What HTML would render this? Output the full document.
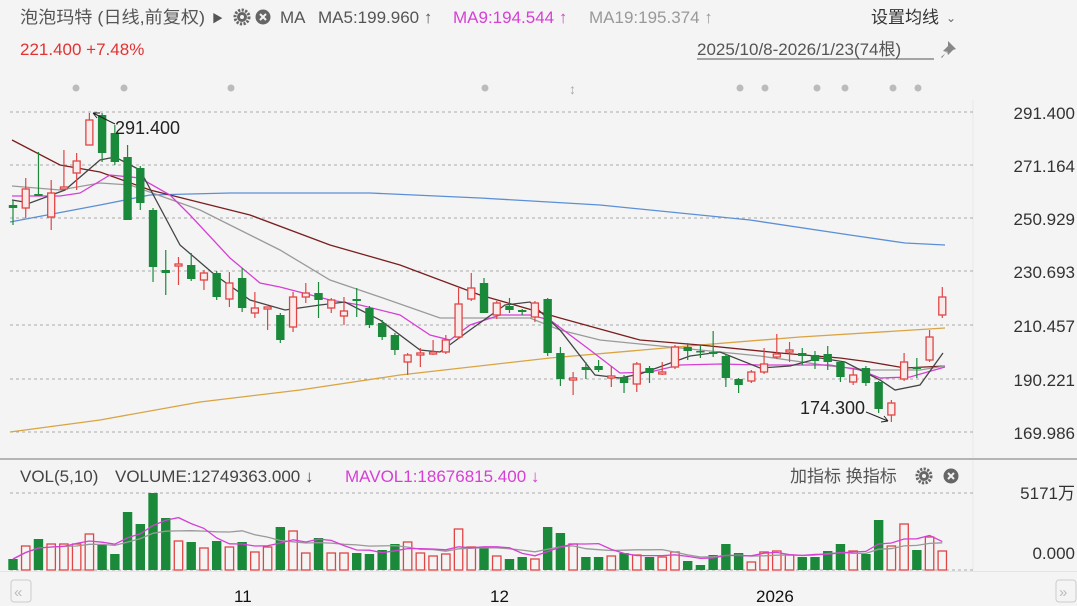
<!DOCTYPE html>
<html><head><meta charset="utf-8">
<style>
body{margin:0;width:1077px;height:606px;overflow:hidden;background:#f4f4f4;font-family:"Liberation Sans","Noto Sans CJK SC",sans-serif;}
svg{position:absolute;left:0;top:0}
</style></head><body>
<svg id="s" width="1077" height="606" xmlns="http://www.w3.org/2000/svg" font-family="Liberation Sans, Noto Sans CJK SC, sans-serif">
<rect x="0" y="0" width="1077" height="606" fill="#f4f4f4"/>
<line x1="973" y1="100" x2="973" y2="570" stroke="#e8e8e8"/>
<g stroke="#aaa" stroke-dasharray="3,3" stroke-width="1">
<line x1="10" y1="112" x2="973" y2="112"/><line x1="10" y1="165" x2="973" y2="165"/>
<line x1="10" y1="218" x2="973" y2="218"/><line x1="10" y1="271" x2="973" y2="271"/>
<line x1="10" y1="325" x2="973" y2="325"/><line x1="10" y1="379" x2="973" y2="379"/>
<line x1="10" y1="432" x2="973" y2="432"/>
<line x1="10" y1="493" x2="973" y2="493"/><line x1="10" y1="570" x2="973" y2="570"/>
</g>
<line x1="0" y1="459" x2="1077" y2="459" stroke="#b5b5b5" stroke-width="2"/>
<line x1="0" y1="571.5" x2="1077" y2="571.5" stroke="#e4e4e4"/>
<g fill="#333" font-size="17" text-anchor="end">
<text x="1075" y="119">291.400</text><text x="1075" y="172">271.164</text>
<text x="1075" y="225">250.929</text><text x="1075" y="278">230.693</text>
<text x="1075" y="332">210.457</text><text x="1075" y="386">190.221</text>
<text x="1075" y="439">169.986</text>
<text x="1075" y="499">5171万</text><text x="1075" y="559">0.000</text>
</g>
<g font-size="17" fill="#555">
<text x="20" y="23" textLength="185" lengthAdjust="spacingAndGlyphs">泡泡玛特 (日线,前复权)</text>
<text x="212" y="22" font-size="11">▶</text>
<text x="280" y="23">MA</text>
<text x="318" y="23">MA5:199.960 ↑</text>
<text x="453" y="23" fill="#d63fd6">MA9:194.544 ↑</text>
<text x="589" y="23" fill="#999">MA19:195.374 ↑</text>
<text x="871" y="23" fill="#333">设置均线</text>
<text x="946" y="22" font-size="12" fill="#666">⌄</text>
<text x="20" y="55" fill="#e03333">221.400 +7.48%</text>
<text x="697" y="55">2025/10/8-2026/1/23(74根)</text>
<text x="20" y="482" fill="#444">VOL(5,10)</text>
<text x="115" y="482" fill="#444">VOLUME:12749363.000 ↓</text>
<text x="345" y="482" fill="#d63fd6">MAVOL1:18676815.400 ↓</text>
<text x="790" y="482" fill="#555">加指标 换指标</text>
<text x="234" y="602" fill="#111">11</text>
<text x="490" y="602" fill="#111">12</text>
<text x="756" y="602" fill="#111">2026</text>
</g>
<line x1="697" y1="59" x2="934" y2="59" stroke="#555"/>
<path d="M948 41l8 8-3 1-5 5-1-4-5 7-1-1 6-5-4-1 5-5z" fill="#888"/>
<g fill="#666">
<circle cx="242" cy="17" r="5"/><circle cx="242" cy="17" r="7" fill="none" stroke="#666" stroke-width="3" stroke-dasharray="2.2,1.4"/><circle cx="242" cy="17" r="2" fill="#f4f4f4"/>
<circle cx="263" cy="17" r="7.5"/>
<circle cx="924" cy="476" r="5"/><circle cx="924" cy="476" r="7" fill="none" stroke="#666" stroke-width="3" stroke-dasharray="2.2,1.4"/><circle cx="924" cy="476" r="2" fill="#f4f4f4"/>
<circle cx="951" cy="476" r="7.5"/>
</g>
<g stroke="#f4f4f4" stroke-width="2"><path d="M260 14l6 6M266 14l-6 6"/><path d="M948 473l6 6M954 473l-6 6"/></g>
<g fill="none" stroke="#ccc"><rect x="11" y="580" width="20" height="22" rx="3"/><rect x="1056" y="580" width="20" height="22" rx="3"/></g>
<text x="14" y="597" font-size="15" fill="#bbb">«</text><text x="1059" y="597" font-size="15" fill="#bbb">»</text>
<g fill="#bbb"><circle cx="76" cy="88" r="3.5"/><circle cx="124" cy="88" r="3.5"/><circle cx="231" cy="88" r="3.5"/><circle cx="485" cy="88" r="3.5"/><circle cx="740" cy="88" r="3.5"/><circle cx="765" cy="88" r="3.5"/><circle cx="817" cy="88" r="3.5"/><circle cx="845" cy="88" r="3.5"/><circle cx="893" cy="88" r="3.5"/><circle cx="918" cy="88" r="3.5"/></g>
<text x="569" y="94" font-size="14" fill="#aaa">↕</text>
<g id="ma" fill="none" stroke-width="1.3"></g>
<g id="cd"></g>
<g id="vol"></g>
<text x="115" y="134" font-size="18" fill="#222">291.400</text>
<path d="M115 124L93 113M93 113l7 0M93 113l4 5" stroke="#222" fill="none"/>
<text x="800" y="414" font-size="18" fill="#222">174.300</text>
<path d="M866 412L888 421M888 421l-7 1M888 421l-4 -5" stroke="#222" fill="none"/>
</svg>
<script>
var C=[
['g',205,208,200,225],['r',189,208,178,218],['g',194,196,152,196],['r',193,217,180,230],['r',187,189,150,190],['r',161,173,153,190],['r',120,145,113,145],['g',115,153,113,162],['g',133,162,125,165],['g',157,220,145,220],['g',168,203,166,210],['g',210,267,208,282],['g',270,273,250,295],['r',264,266,257,285],['g',265,279,253,281],['r',273,280,270,290],['g',273,297,271,300],['r',283,299,272,307],['g',278,308,268,312],['r',308,313,292,318],['r',307,309,307,330],['g',315,340,313,343],['r',297,327,292,332],['r',293,297,283,303],['g',293,300,282,318],['r',300,308,298,313],['r',311,316,297,325],['g',299,301,288,317],['g',308,325,306,328],['g',323,337,320,340],['g',335,350,333,355],['r',355,362,353,375],['r',353,355,348,367],['r',352,354,340,355],['r',340,352,335,354],['r',304,337,288,339],['r',288,299,273,301],
['g',283,313,278,313],['r',303,315,301,319],['g',306,310,298,313],['g',310,312,309,315],['r',303,317,301,322],['g',299,353,298,356],['g',353,379,347,386],['r',378,380,372,395],['g',367,370,362,379],['g',366,370,360,372],['r',376,378,366,387],['g',377,383,375,393],['r',364,384,362,392],['g',368,373,366,383],['r',372,374,362,375],['r',347,367,345,369],['g',347,351,343,360],['g',351,352,345,358],['g',352,354,331,357],['g',356,378,354,387],['g',379,385,378,393],['r',372,381,370,383],['r',364,372,348,374],['r',354,357,334,359],['r',350,352,342,362],['g',353,356,348,365],['g',355,361,351,369],['g',354,362,346,370],['g',362,377,361,382],['r',375,382,368,385],['g',368,383,366,386],['g',382,409,381,413],['r',403,415,400,422],['r',362,379,353,381],['g',367,369,358,378],['r',337,360,330,362],['r',297,315,287,318]];
var V=[559,546,539,544,544,544,534,545,554,512,524,493,518,541,542,548,541,547,542,552,547,527,531,553,538,553,553,553,554,550,544,542,553,556,554,529,547,548,556,559,557,559,527,533,544,557,557,556,553,555,557,557,552,561,565,555,544,553,562,552,551,555,557,557,551,544,551,554,520,546,524,550,537,551];
var ns="http://www.w3.org/2000/svg",cd=document.getElementById('cd'),vg=document.getElementById('vol'),mg=document.getElementById('ma');
function el(p,t,a){var e=document.createElementNS(ns,t);for(var k in a)e.setAttribute(k,a[k]);p.appendChild(e);return e;}
var R='#e04545',G='#1a8a3a';
C.forEach(function(c,i){var x=13+i*12.73,col=c[0]=='r'?R:G;
el(cd,'line',{x1:x,x2:x,y1:c[3],y2:c[4],stroke:col,'stroke-width':1.2});
var h=Math.max(c[2]-c[1],1.5);
if(c[0]=='r')el(cd,'rect',{x:x-3.5,y:c[1],width:7,height:h,fill:'#fbeaea',stroke:R,'stroke-width':1.3});
else el(cd,'rect',{x:x-4.2,y:c[1],width:8.4,height:h,fill:G});
var v=V[i];
if(c[0]=='r')el(vg,'rect',{x:x-4.2,y:v,width:8.4,height:570-v,fill:'none',stroke:R,'stroke-width':1.3});
else el(vg,'rect',{x:x-4.7,y:v,width:9.4,height:570-v,fill:G});
});
function ma(n){var p=[];for(var i=0;i<V.length;i++){var s=0,k=0;for(var j=Math.max(0,i-n+1);j<=i;j++){s+=V[j];k++;}p.push((13+i*12.73).toFixed(1)+','+(s/k).toFixed(1));}return p.join(' ');}
el(vg,'polyline',{points:ma(10),fill:'none',stroke:'#999','stroke-width':1.3});
el(vg,'polyline',{points:ma(5),fill:'none',stroke:'#d63fd6','stroke-width':1.3});
var L=[
['#5b8fd6','10,222 100,205 150,195 230,193 370,193 480,198 600,205 750,220 850,235 905,243 945,245'],
['#d9a441','10,432 100,420 200,402 300,390 400,375 550,358 700,345 800,337 945,328'],
['#7a1e1e','12,140 60,165 100,172 150,190 250,215 330,245 400,265 480,295 560,318 640,340 700,345 780,353 840,358 870,362 905,368 945,366'],
['#9a9a9a','12,186 60,190 100,183 130,185 200,210 280,250 330,280 380,297 440,318 480,318 530,318 560,330 600,340 680,348 760,356 830,366 870,370 920,370 945,366'],
['#d63fd6','12,196 60,196 80,193 110,175 140,178 170,195 190,215 230,258 260,283 280,287 330,300 360,305 400,315 430,335 450,340 470,325 500,315 530,315 550,320 590,350 620,373 650,372 680,365 720,364 760,365 800,365 830,365 860,370 880,378 910,377 945,367'],
['#444','12,200 30,203 65,190 100,160 115,157 140,170 180,245 215,275 250,300 285,310 320,305 345,302 380,320 420,350 440,352 470,330 505,305 530,302 560,330 595,375 620,378 640,374 690,356 720,352 760,368 790,366 820,358 845,362 880,380 895,390 920,385 943,353']];
L.forEach(function(l){el(mg,'polyline',{points:l[1],stroke:l[0]});});
</script>
</body></html>
